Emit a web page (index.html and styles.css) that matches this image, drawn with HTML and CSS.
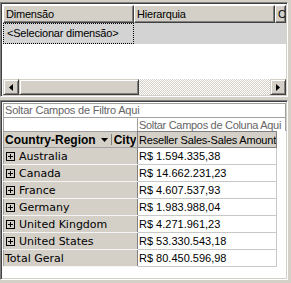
FILE: index.html
```html
<!DOCTYPE html>
<html lang="pt">
<head>
    <meta charset="UTF-8">
    <title>Pivot</title>
    <link rel="stylesheet" href="styles.css">
</head>
<body>
    <div class="window">
        <div class="grid-pane">
            <div class="grid-header">
                <div class="col-head col-dim">Dimensão</div>
                <div class="col-head col-hier">Hierarquia</div>
                <div class="col-head col-rest">C</div>
            </div>
            <div class="grid-row selected">
                <div class="cell col-dim focus">&lt;Selecionar dimensão&gt;</div>
                <div class="cell col-hier"></div>
                <div class="cell col-rest"></div>
            </div>
            <div class="grid-empty"></div>
            <div class="hscroll">
                <div class="sb-btn">
                    <svg width="4" height="7" viewBox="0 0 4 7"><path d="M4 0V7L0 3.5Z" fill="#000"/></svg>
                </div>
                <div class="sb-thumb"></div>
                <div class="sb-track"></div>
                <div class="sb-btn">
                    <svg width="4" height="7" viewBox="0 0 4 7"><path d="M0 0V7L4 3.5Z" fill="#000"/></svg>
                </div>
            </div>
        </div>

        <div class="pivot-pane">
            <div class="drop-filter">Soltar Campos de Filtro Aqui</div>
            <div class="drop-cols">
                <div class="drop-blank"></div>
                <div class="drop-col-text">Soltar Campos de Coluna Aqui</div>
            </div>
            <table class="pivot">
                <colgroup>
                    <col class="col-label">
                    <col class="col-value">
                </colgroup>
                <thead>
                    <tr>
                        <th class="row-fields">
                            <div class="field-list">
                                <span class="field">Country-Region</span>
                                <svg class="arrow" width="7" height="4" viewBox="0 0 7 4"><path d="M0 0H7L3.5 4Z" fill="#000"/></svg>
                                <span class="sep"></span>
                                <span class="field">City</span>
                            </div>
                        </th>
                        <th class="data-field">Reseller Sales-Sales Amount</th>
                    </tr>
                </thead>
                <tbody>
                    <tr><td class="label"><span class="expand"></span>Australia</td><td class="value">R$ 1.594.335,38</td></tr>
                    <tr><td class="label"><span class="expand"></span>Canada</td><td class="value">R$ 14.662.231,23</td></tr>
                    <tr><td class="label"><span class="expand"></span>France</td><td class="value">R$ 4.607.537,93</td></tr>
                    <tr><td class="label"><span class="expand"></span>Germany</td><td class="value">R$ 1.983.988,04</td></tr>
                    <tr><td class="label"><span class="expand"></span>United Kingdom</td><td class="value">R$ 4.271.961,23</td></tr>
                    <tr><td class="label"><span class="expand"></span>United States</td><td class="value">R$ 53.330.543,18</td></tr>
                    <tr><td class="label">Total Geral</td><td class="value">R$ 80.450.596,98</td></tr>
                </tbody>
            </table>
        </div>
    </div>
</body>
</html>
```

FILE: styles.css
```css
body {
    margin: 0;
    background-color: #d4d0c8;
    font-family: "Liberation Sans", sans-serif;
    font-size: 11px;
    letter-spacing: -0.2px;
    color: #000;
}

.window {
    width: 291px;
    height: 283px;
    padding: 2px 3px 3px 0;
    box-sizing: border-box;
    display: flex;
    flex-direction: column;
    gap: 3px;
    overflow: hidden;
}

/* top grid */
.grid-pane {
    height: 95px;
    box-sizing: border-box;
    border: 1px solid;
    border-color: #808080 #fff #fff #808080;
    box-shadow: inset 1px 1px #404040, inset -1px -1px #d4d0c8;
    padding: 2px 1px 1px 2px;
    background-color: #fff;
    display: flex;
    flex-direction: column;
    overflow: hidden;
}

.grid-header,
.grid-row {
    display: flex;
    flex-shrink: 0;
}

.col-dim { width: 131px; }
.col-hier { width: 141px; }
.col-rest { flex: 1; }

.col-head {
    height: 18px;
    box-sizing: border-box;
    background-color: #d4d0c8;
    border: 1px solid;
    border-color: #fff #404040 #404040 #fff;
    box-shadow: inset -1px -1px #808080;
    padding: 2px 2px;
    white-space: nowrap;
    overflow: hidden;
    line-height: 13px;
}

.grid-row.selected {
    background-color: #d3d3d3;
}

.cell {
    height: 21px;
    box-sizing: border-box;
    padding: 3px 3px;
    white-space: nowrap;
    line-height: 13px;
}

.cell.focus {
    border: 1px dotted #000;
}

.grid-empty {
    flex: 1;
}

.hscroll {
    height: 16px;
    display: flex;
    flex-shrink: 0;
}

.sb-btn,
.sb-thumb {
    box-sizing: border-box;
    background-color: #d4d0c8;
    border: 1px solid;
    border-color: #d4d0c8 #404040 #404040 #d4d0c8;
    box-shadow: inset 1px 1px #fff, inset -1px -1px #808080;
}

.sb-btn {
    width: 16px;
    display: flex;
    align-items: center;
    justify-content: center;
}

.sb-thumb {
    width: 120px;
}

.sb-track {
    flex: 1;
    background: repeating-conic-gradient(#d4d0c8 0 25%, #fff 0 50%) 0 0 / 2px 2px;
}

/* pivot */
.pivot-pane {
    flex: 1;
    box-sizing: border-box;
    border: 1px solid;
    border-color: #808080 #fff #fff #808080;
    box-shadow: inset 1px 1px #404040, inset -1px -1px #d4d0c8;
    padding: 2px 1px 2px 2px;
    background-color: #fff;
    overflow: hidden;
}

.drop-filter {
    height: 15px;
    box-sizing: border-box;
    border: 1px solid #a0a0a0;
    color: #666;
    padding: 0 1px;
    line-height: 13px;
    white-space: nowrap;
}

.drop-cols {
    display: flex;
    height: 13px;
    border-left: 1px solid #a0a0a0;
    border-right: 1px solid #a0a0a0;
}

.drop-blank {
    width: 133px;
}

.drop-col-text {
    flex: 1;
    border-left: 1px solid #a0a0a0;
    color: #666;
    padding: 0 1px;
    line-height: 14px;
    letter-spacing: -0.3px;
    white-space: nowrap;
    overflow: hidden;
}

.pivot {
    width: 273px;
    border-collapse: collapse;
    table-layout: fixed;
}

.col-label { width: 134px; }
.col-value { width: 139px; }

.pivot th,
.pivot td {
    height: 16px;
    padding: 0 1px;
    white-space: nowrap;
    overflow: hidden;
    text-align: left;
    font-weight: normal;
}

.pivot th {
    height: 15px;
}

.pivot .row-fields {
    background-color: #d4d0c8;
    border: 1px solid #a0a0a0;
    border-right-color: #808080;
}

.field-list {
    display: flex;
    align-items: center;
    overflow: hidden;
    white-space: nowrap;
}

.field {
    font-size: 12px;
    font-weight: bold;
    letter-spacing: 0;
}

.arrow {
    flex-shrink: 0;
    margin: 0 3px 0 5px;
}

.sep {
    flex-shrink: 0;
    width: 1px;
    height: 11px;
    background-color: #808080;
    margin-right: 2px;
}

.pivot .data-field {
    background-color: #d4d0c8;
    border: 1px solid #808080;
}

.pivot .label {
    background-color: #d4d0c8;
    border: 1px solid #f4f4f4;
    border-left-color: #a0a0a0;
    border-right-color: #808080;
    font-family: "DejaVu Sans", sans-serif;
    letter-spacing: 0;
}

.pivot .value {
    border: 1px solid #c8c8c8;
    border-left-color: #808080;
    letter-spacing: 0;
}

.expand {
    display: inline-block;
    width: 9px;
    height: 9px;
    box-sizing: border-box;
    border: 1px solid #000;
    margin: 0 4px 0 1px;
    vertical-align: -1px;
    background:
        linear-gradient(#000, #000) center / 5px 1px no-repeat,
        linear-gradient(#000, #000) center / 1px 5px no-repeat;
}
```
